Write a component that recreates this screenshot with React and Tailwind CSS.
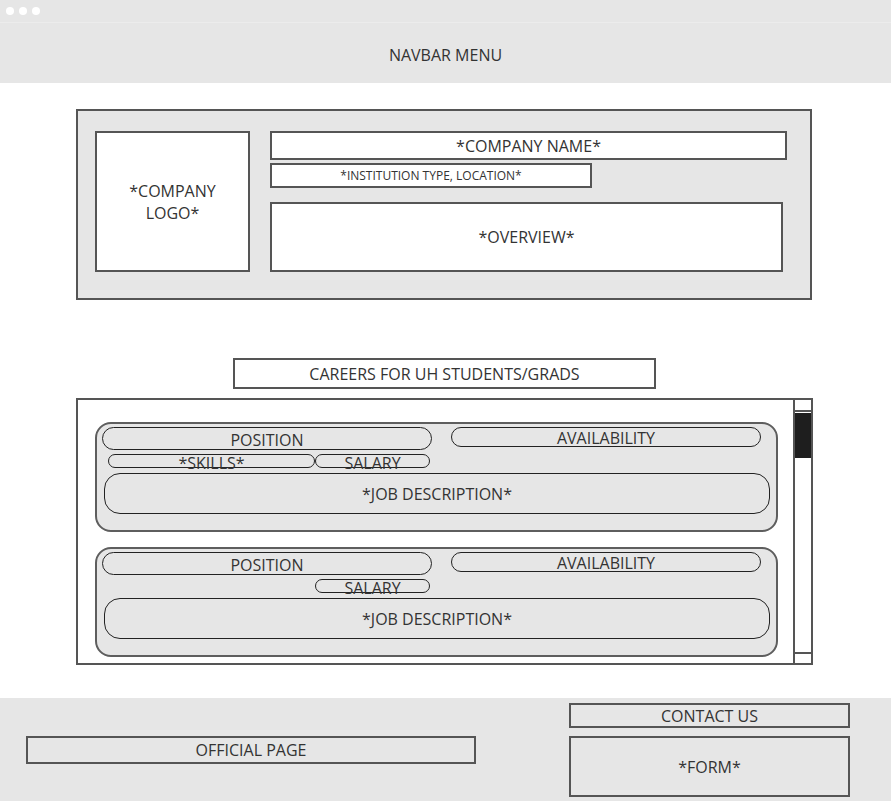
// App.jsx
// Wireframe de la página de empresa — bloques grises con bordes oscuros

const box = "border-2 border-[#555]";
const thin = "border border-[#222]";

function Pill({ className, children }) {
  return (
    <div
      className={`${thin} rounded-full flex items-center justify-center text-[16px] text-[#333] leading-none ${className}`}
    >
      {children}
    </div>
  );
}

function JobCard({ skills, top }) {
  return (
    <div className={`border-2 border-[#5e5e5e] w-[683px] h-[110px] rounded-[16px] bg-[#e6e6e6] ${top}`}>
      <div className="flex pt-[3px] pl-[5px] gap-[19px]">
        <Pill className="w-[330px] h-[23px] pt-[2px]">POSITION</Pill>
        <Pill className="w-[310px] h-[20px] pt-[1px]">AVAILABILITY</Pill>
      </div>
      <div className="flex mt-[4px] pl-[11px] h-[14px]">
        {skills ? (
          <Pill className="w-[207px] h-[14px] pt-[3px] leading-[14px]">*SKILLS*</Pill>
        ) : (
          <div className="w-[207px]" />
        )}
        <Pill className="w-[115px] h-[14px] pt-[3px] leading-[14px]">SALARY</Pill>
      </div>
      <div
        className={`${thin} ml-[7px] mt-[5px] w-[666px] h-[41px] rounded-[16px] flex items-center justify-center text-[16px] text-[#333]`}
      >
        *JOB DESCRIPTION*
      </div>
    </div>
  );
}

export default function App() {
  return (
    <div
      className="w-[891px] h-[801px] bg-white overflow-hidden text-[#333]"
      style={{ fontFamily: '"Open Sans", "Noto Sans", sans-serif' }}
    >
      {/* Navbar */}
      <div className="h-[83px] bg-[#e6e6e6]">
        <div className="h-[23px] border-b border-[#ececec] flex items-center gap-[5px] pl-[6px]">
          <span className="w-[8px] h-[8px] rounded-full bg-white" />
          <span className="w-[8px] h-[8px] rounded-full bg-white" />
          <span className="w-[8px] h-[8px] rounded-full bg-white" />
        </div>
        <div className="h-[60px] flex items-center justify-center text-[16px] pt-[3px]">
          NAVBAR MENU
        </div>
      </div>

      {/* Empresa */}
      <div className={`${box} ml-[76px] mt-[26px] w-[736px] h-[191px] bg-[#e6e6e6] flex pl-[17px] pt-[20px] gap-[20px]`}>
        <div className={`${box} w-[155px] h-[141px] bg-white flex items-center justify-center text-center text-[16px] leading-[22px]`}>
          *COMPANY
          <br />
          LOGO*
        </div>
        <div className="flex flex-col">
          <div className={`${box} w-[517px] h-[29px] bg-white flex items-center justify-center text-[16px]`}>
            *COMPANY NAME*
          </div>
          <div className={`${box} mt-[3px] w-[322px] h-[25px] bg-white flex items-center justify-center text-[12px]`}>
            *INSTITUTION TYPE, LOCATION*
          </div>
          <div className={`${box} mt-[14px] w-[513px] h-[70px] bg-white flex items-center justify-center text-[16px]`}>
            *OVERVIEW*
          </div>
        </div>
      </div>

      {/* Carreras */}
      <div className={`${box} ml-[233px] mt-[58px] w-[423px] h-[31px] flex items-center justify-center text-[16px]`}>
        CAREERS FOR UH STUDENTS/GRADS
      </div>

      <div className={`${box} ml-[76px] mt-[9px] w-[737px] h-[267px] bg-white flex`}>
        <div className="flex-1 pl-[17px] pt-[22px]">
          <JobCard skills top="" />
          <JobCard top="mt-[15px]" />
        </div>
        <div className="w-[18px] border-l-2 border-[#555] flex flex-col">
          <div className="h-[12px] border-b-2 border-[#555]" />
          <div className="h-[45px] mt-[1px] bg-[#1e1e1e]" />
          <div className="flex-1" />
          <div className="h-[11px] border-t-2 border-[#555]" />
        </div>
      </div>

      {/* Footer */}
      <div className="mt-[33px] h-[104px] bg-[#e6e6e6] border-b border-[#bdbdbd] flex pl-[26px]">
        <div className={`${box} mt-[38px] w-[450px] h-[28px] flex items-center justify-center text-[16px]`}>
          OFFICIAL PAGE
        </div>
        <div className="ml-[93px] pt-[5px] flex flex-col">
          <div className={`${box} w-[281px] h-[25px] flex items-center justify-center text-[16px]`}>
            CONTACT US
          </div>
          <div className={`${box} mt-[8px] w-[281px] h-[61px] flex items-center justify-center text-[16px]`}>
            *FORM*
          </div>
        </div>
      </div>
    </div>
  );
}
